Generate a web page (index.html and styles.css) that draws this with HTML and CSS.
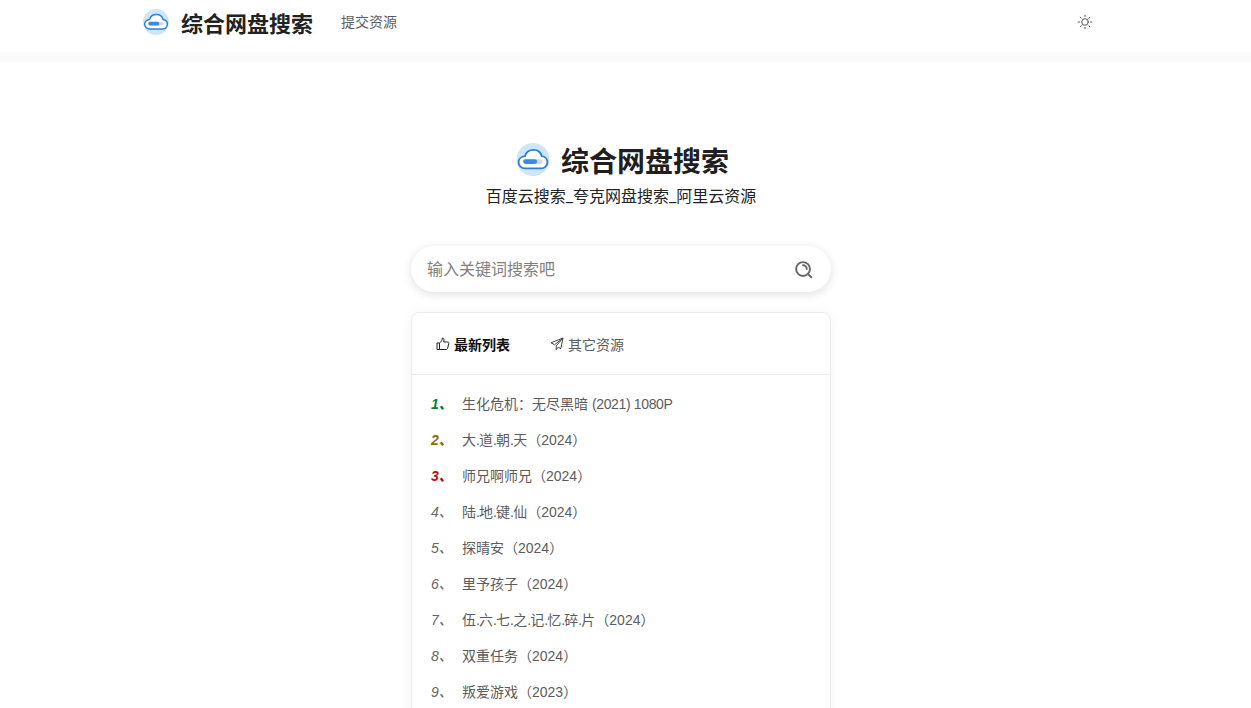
FILE: index.html
```html
<!DOCTYPE html>
<html lang="zh-CN">
<head>
<meta charset="utf-8">
<title>综合网盘搜索</title>
<link rel="stylesheet" href="styles.css">
</head>
<body>
<svg class="defs" width="0" height="0" aria-hidden="true">
  <symbol id="logo" viewBox="0 0 32 32">
    <circle cx="16" cy="16" r="16" fill="#cfe5fb"/>
    <path d="M8.2 24.6h15.6c3.4 0 6.2-2.6 6.2-5.900 0-3.100-2.400-5.600-5.500-5.900C23.600 8.900 20.200 6.700 16.500 6.700c-4 0-7.300 2.500-8.300 6.100C4.700 13.100 2 15.600 2 18.700c0 3.200 2.800 5.900 6.200 5.900z" fill="#fff" stroke="#2f7fd6" stroke-width="1.800" stroke-linejoin="round"/>
    <rect x="6.500" y="15.700" width="19" height="4.600" rx="2.300" fill="#d5dbe3"/>
    <rect x="6.500" y="15.700" width="13.500" height="4.600" rx="2.300" fill="#3d8be0"/>
  </symbol>
</svg>
<div class="page">
<header class="topbar">
  <div class="topbar-inner">
    <a class="brand">
      <svg class="brand-logo"><use href="#logo"/></svg>
      <span class="brand-name">综合网盘搜索</span>
    </a>
    <a class="nav-link">提交资源</a>
    <svg class="theme-icon" viewBox="0 0 16 16" fill="none" stroke="#555" stroke-width="1" stroke-linecap="round">
      <circle cx="8" cy="8" r="3.300"/>
      <path d="M8 1.200v1.300M8 13.500v1.300M1.200 8h1.300M13.500 8h1.300M3.200 3.200l.9.9M11.900 11.900l.9.9M3.200 12.800l.9-.9M11.900 4.100l.9-.9"/>
    </svg>
  </div>
</header>
<main class="main">
  <div class="hero">
    <svg class="hero-logo"><use href="#logo"/></svg>
    <h1 class="hero-title">综合网盘搜索</h1>
  </div>
  <p class="subtitle">百度云搜索_夸克网盘搜索_阿里云资源</p>
  <div class="search">
    <span class="search-text">输入关键词搜索吧</span>
    <svg class="search-icon" viewBox="0 0 20 20" fill="none" stroke="#666" stroke-width="2" stroke-linecap="round">
      <circle cx="9.500" cy="9.500" r="7.300"/>
      <path d="M9.500 5.600a3.900 3.900 0 0 1 3.900 3.900M14.800 14.800l3.400 3.400"/>
    </svg>
  </div>
  <section class="card">
    <div class="tabs">
      <span class="tab tab-active">
        <svg class="tab-icon" viewBox="0 0 14 14" fill="none" stroke="#222" stroke-width="1" stroke-linejoin="round">
          <path d="M1 6h2.500v6.500H1zM3.500 6l2.300-2.200L6.300 1c1.300 0 1.900.9 1.700 2.100L7.700 5h4c.8 0 1.300.6 1.100 1.400l-1.200 5c-.2.700-.6 1.100-1.300 1.100H3.500"/>
        </svg>最新列表</span>
      <span class="tab">
        <svg class="tab-icon" viewBox="0 0 14 14" fill="none" stroke="#444" stroke-width="1" stroke-linejoin="round">
          <path d="M13 1 1 5.800l3.600 1.900L13 1 6.200 9v3.800l2-2.600 2.600 1.400z"/>
        </svg>其它资源</span>
    </div>
    <ol class="list">
      <li class="item"><span class="rank rank-1">1、</span><a class="item-title">生化危机：无尽黑暗 <span class="num">(2021) 1080P</span></a></li>
      <li class="item"><span class="rank rank-2">2、</span><a class="item-title">大<span class="dot">.</span>道<span class="dot">.</span>朝<span class="dot">.</span>天（2024）</a></li>
      <li class="item"><span class="rank rank-3">3、</span><a class="item-title">师兄啊师兄（2024）</a></li>
      <li class="item"><span class="rank">4、</span><a class="item-title">陆<span class="dot">.</span>地<span class="dot">.</span>键<span class="dot">.</span>仙（2024）</a></li>
      <li class="item"><span class="rank">5、</span><a class="item-title">探晴安（2024）</a></li>
      <li class="item"><span class="rank">6、</span><a class="item-title">里予孩子（2024）</a></li>
      <li class="item"><span class="rank">7、</span><a class="item-title">伍<span class="dot">.</span>六<span class="dot">.</span>七<span class="dot">.</span>之<span class="dot">.</span>记<span class="dot">.</span>忆<span class="dot">.</span>碎<span class="dot">.</span>片（2024）</a></li>
      <li class="item"><span class="rank">8、</span><a class="item-title">双重任务（2024）</a></li>
      <li class="item"><span class="rank">9、</span><a class="item-title">叛爱游戏（2023）</a></li>
    </ol>
  </section>
</main>
</div>
</body>
</html>
```
FILE: styles.css
```css
* { box-sizing: border-box; }
html, body { margin: 0; padding: 0; height: 708px; overflow: hidden; background: #fff; }
body { font-family: "Liberation Sans", "Noto Sans CJK SC", sans-serif; color: #333; }
.defs { display: block; height: 0; }
.page { width: 1242px; }
.topbar { height: 62px; background: #fff; border-bottom: 10px solid #fbfbfb; width: 1251px; }
.topbar-inner { width: 965px; margin: 0 auto; height: 44px; display: flex; align-items: center; }
.brand { display: flex; align-items: center; }
.brand-logo { width: 26px; height: 26px; }
.brand-name { margin-left: 12px; font-size: 22px; font-weight: 700; color: #222; }
.nav-link { margin-left: 28px; margin-bottom: 2px; font-size: 14px; color: #5c5c5c; }
.theme-icon { width: 16px; height: 16px; margin-left: auto; margin-right: 15px; }
.main { display: flex; flex-direction: column; align-items: center; padding-top: 81px; }
.hero { display: flex; align-items: center; height: 33px; margin-left: 3px; }
.hero-logo { width: 34px; height: 33px; }
.hero-title { margin: 6px 0 0 11px; font-size: 28px; font-weight: 700; color: #1f1f1f; line-height: 36px; }
.subtitle { margin: 10px 0 0; font-family: Roboto, "Noto Sans CJK SC", sans-serif; font-size: 16px; line-height: 22px; color: #222; }
.search { width: 420px; height: 46px; margin-top: 38px; padding: 0 18px 0 16px; border-radius: 23px; background: #fff; box-shadow: 0 2px 10px rgba(0, 0, 0, .13); display: flex; align-items: center; justify-content: space-between; }
.search-text { margin-bottom: 3px; font-size: 16px; color: #808080; }
.search-icon { width: 19px; height: 19px; }
.card { width: 420px; margin-top: 20px; border: 1px solid #ececec; border-radius: 8px; background: #fff; box-shadow: 0 2px 12px rgba(0, 0, 0, .05); }
.tabs { display: flex; align-items: center; height: 62px; padding: 0 24px; border-bottom: 1px solid #ececec; gap: 40px; }
.tab { display: flex; align-items: center; font-size: 14px; color: #5c5c5c; }
.tab-active { font-weight: 700; color: #111; }
.tab-icon { width: 14px; height: 14px; margin-right: 4px; }
.list { list-style: none; margin: 0; padding: 10px 19px 20px; }
.item { height: 36px; display: flex; align-items: center; font-size: 14px; }
.rank { width: 31px; font-style: italic; color: #666; }
.rank-1, .rank-2, .rank-3 { font-weight: 700; }
.rank-1 { color: #0f7a3f; }
.rank-2 { color: #8a6d00; }
.rank-3 { color: #b01010; }
.item-title { color: #5c5c5c; }
.num { letter-spacing: -.35px; }
.dot { letter-spacing: -.85px; }
```
